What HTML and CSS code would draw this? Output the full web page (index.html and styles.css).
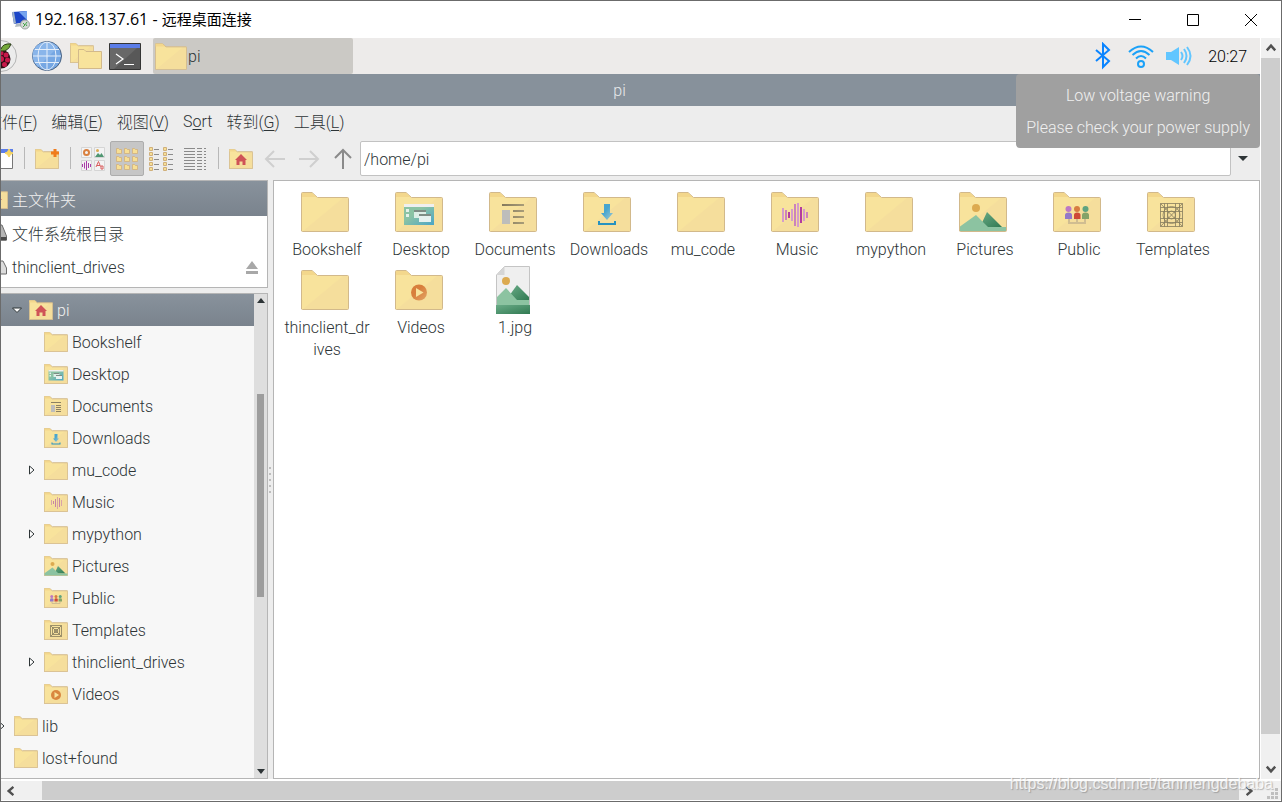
FILE: index.html
```html
<!DOCTYPE html>
<html lang="zh-CN">
<head>
    <meta charset="UTF-8">
    <meta name="viewport" content="width=device-width, initial-scale=1.0">
    <title>192.168.137.61 - 远程桌面连接</title>
    <link rel="stylesheet" href="styles.css">
</head>
<body>
    <!-- Shared icons -->
    <svg class="sprite" aria-hidden="true">
        <defs>
            <linearGradient id="folderFill" x1="0" y1="0" x2="1" y2="1">
                <stop offset="0.5" stop-color="#f8e39c"/>
                <stop offset="0.52" stop-color="#f5de9c"/>
            </linearGradient>
            <linearGradient id="deskFill" x1="0" y1="0" x2="1" y2="1">
                <stop offset="0.4" stop-color="#8bc3a4"/>
                <stop offset="1" stop-color="#4aa5c8"/>
            </linearGradient>
            <linearGradient id="hillFill" x1="0" y1="0" x2="1" y2="1">
                <stop offset="0" stop-color="#6aab87"/>
                <stop offset="1" stop-color="#317a52"/>
            </linearGradient>
            <linearGradient id="downFill" x1="0" y1="0" x2="1" y2="1">
                <stop offset="0.4" stop-color="#47a5cf"/>
                <stop offset="1" stop-color="#a5cbd0"/>
            </linearGradient>
            <linearGradient id="lineFill" x1="0" y1="0" x2="1" y2="0">
                <stop offset="0" stop-color="#84795c"/>
                <stop offset="1" stop-color="#a89c78"/>
            </linearGradient>
            <linearGradient id="playFill" x1="0" y1="0" x2="1" y2="1">
                <stop offset="0.4" stop-color="#d87f3c"/>
                <stop offset="1" stop-color="#e3a566"/>
            </linearGradient>
        </defs>
        <symbol id="folder" viewBox="0 0 48 40">
            <path d="M.5 39V1.500Q.5 .5 1.500 .5H11L16.500 5.500H46.500Q47.500 5.500 47.500 6.500V38.500Q47.500 39.500 46.500 39.500H1.500Q.5 39.500 .5 38.500Z" fill="url(#folderFill)" stroke="#d2b98b" vector-effect="non-scaling-stroke"/>
            <path d="M1 1H11L15.500 5H1Z" fill="#f3d78c"/>
        </symbol>
        <symbol id="folder-desktop" viewBox="0 0 48 40">
            <use href="#folder"/>
            <path d="M9 12H39V33H9Z" fill="url(#deskFill)"/>
            <path d="M9 12H39V15H9Z" fill="#efefef"/>
            <path d="M11 17h3v3h-3ZM11 22h3v3h-3Z" fill="#e5f2ea"/>
            <path d="M19 18H31V26H19Z" fill="#dceee6"/>
            <path d="M24 22H36V30H24Z" fill="#e6f2f0"/>
            <path d="M19 18H31V20H19ZM24 22H36V24H24Z" fill="#7e8d85"/>
        </symbol>
        <symbol id="folder-documents" viewBox="0 0 48 40">
            <use href="#folder"/>
            <path d="M13 12H35V14H13ZM24 18H35V20H24ZM24 24H35V26H24ZM24 30H35V32H24Z" fill="url(#lineFill)"/>
            <path d="M13 18H21V32H13Z" fill="#bdbdbb"/>
        </symbol>
        <symbol id="folder-documents-small" viewBox="0 0 24 20">
            <use href="#folder"/>
            <path d="M7 6H17V7H7ZM12 9H17V10H12ZM12 11H17V12H12ZM12 13H17V14H12ZM12 15H17V16H12Z" fill="#8c8162"/>
            <path d="M7 9H11V16H7Z" fill="#bdbdbb"/>
        </symbol>
        <symbol id="folder-downloads" viewBox="0 0 48 40">
            <use href="#folder"/>
            <path d="M21 12H27V21H30L24 28L18 21H21Z" fill="url(#downFill)"/>
            <path d="M15 29h2v2h14v-2h2v4H15Z" fill="#2792c0"/>
        </symbol>
        <symbol id="folder-music" viewBox="0 0 48 40">
            <use href="#folder"/>
            <g stroke-width="2">
                <path d="M12 16V30M21 17V29M27 11V35M33 17V29" stroke="#d59ccb"/>
                <path d="M15 18V28M24 12V34M36 20V26" stroke="#cc83bb"/>
                <path d="M18 20V26M30 15V31" stroke="#b43d9e"/>
            </g>
        </symbol>
        <symbol id="folder-music-small" viewBox="0 0 24 20">
            <use href="#folder"/>
            <path d="M7.500 8V13M13.500 5V17M17.500 8V14" stroke="#d9a3a8"/>
            <path d="M9.500 9V12M11.500 7V15M15.500 6V15" stroke="#c585a4"/>
        </symbol>
        <symbol id="folder-pictures" viewBox="0 0 48 40">
            <use href="#folder"/>
            <circle cx="17" cy="16" r="4" fill="#dcaa50"/>
            <path d="M21 35L28 20L43 35Z" fill="url(#hillFill)"/>
            <path d="M1 34.500L17 23L29 35H47V39H1Z" fill="#8cc3a1"/>
        </symbol>
        <symbol id="folder-public" viewBox="0 0 48 40">
            <use href="#folder"/>
            <path d="M16 27V31H32V27M24 27V31" fill="none" stroke="#d0bd91" stroke-width="2"/>
            <circle cx="15.500" cy="17" r="3" fill="#bd79c4"/>
            <path d="M12 27V23Q12 20.500 15.500 20.500Q19 20.500 19 23V27Z" fill="#9379c8"/>
            <circle cx="24" cy="17" r="3" fill="#d77d41"/>
            <path d="M21 27V23Q21 20.500 24 20.500Q27.500 20.500 27.500 23V27Z" fill="#cf4a37"/>
            <circle cx="32.500" cy="17" r="3" fill="#5fa480"/>
            <path d="M29 27V23Q29 20.500 32.500 20.500Q36 20.500 36 23V27Z" fill="#84a368"/>
        </symbol>
        <symbol id="folder-templates" viewBox="0 0 48 40">
            <use href="#folder"/>
            <g fill="none" stroke="#857c5d" stroke-width="0.800">
                <path d="M13.500 11.500H35.500V34.500H13.500ZM13.500 11.500L35.500 34.500M35.500 11.500L13.500 34.500M13.500 15.500H35.500M13.500 19.500H35.500M13.500 26.500H35.500M13.500 30.500H35.500M17.500 11.500V34.500M20.500 11.500V34.500M28.500 11.500V34.500M32.500 11.500V34.500"/>
                <circle cx="24.500" cy="23" r="8.500"/>
                <circle cx="24.500" cy="23" r="4"/>
            </g>
        </symbol>
        <symbol id="folder-templates-small" viewBox="0 0 24 20">
            <use href="#folder"/>
            <path d="M6.500 5.500H17.500V16.500H6.500ZM8.500 7.500H15.500V14.500H8.500ZM10.500 9.500H13.500V12.500H10.500ZM6.500 5.500L17.500 16.500M17.500 5.500L6.500 16.500" fill="none" stroke="#857c5d" stroke-width="0.800"/>
        </symbol>
        <symbol id="folder-videos" viewBox="0 0 48 40">
            <use href="#folder"/>
            <circle cx="24" cy="22.500" r="8" fill="url(#playFill)"/>
            <path d="M21 18L28.500 22.500L21 27Z" fill="#f8e39c"/>
        </symbol>
        <symbol id="folder-videos-small" viewBox="0 0 24 20">
            <use href="#folder"/>
            <circle cx="12" cy="11" r="5" fill="#d9873f"/>
            <path d="M10.500 8L15 11L10.500 14Z" fill="#f8e39c"/>
        </symbol>
        <symbol id="folder-home" viewBox="0 0 48 40">
            <use href="#folder"/>
            <path d="M24 10L36 22H33V32H27V25H21V32H15V22H12Z" fill="#cf5357"/>
        </symbol>
        <symbol id="image-file" viewBox="0 0 48 48">
            <path d="M7.500 9L15.500 .5H40.500V47.500H7.500Z" fill="#efefef" stroke="#c4c4c4"/>
            <path d="M7.500 9L15.500 .5V9Z" fill="#d5d5d5"/>
            <circle cx="17" cy="15" r="4" fill="#dcaa50"/>
            <path d="M20 30L28 19L40 31V34H20Z" fill="url(#hillFill)"/>
            <path d="M8 31L17 22L28 34H40V39H8Z" fill="#8cc3a1"/>
            <path d="M7 39H41V48H7Z" fill="url(#hillFill)"/>
        </symbol>
        <symbol id="drive" viewBox="0 0 24 20">
            <path d="M4 2H18L22.500 13V17H1V13Z" fill="#b5b5b5" stroke="#6d6d6d"/>
            <path d="M1 14H22.500V17.500H1Z" fill="#4a4a4a"/>
        </symbol>
        <symbol id="drive-light" viewBox="0 0 24 20">
            <path d="M4 4H19L22.500 11V17H1V11Z" fill="#dcdcdc" stroke="#6d6d6d"/>
        </symbol>
        <symbol id="expander" viewBox="0 0 8 12">
            <path d="M1.500 2L6 6L1.500 10Z" fill="#fff" stroke="#2d3436"/>
        </symbol>
        <symbol id="chevron" viewBox="0 0 10 10">
            <path d="M1.500 7L5 3L8.500 7" fill="none" stroke="#505050" stroke-width="2"/>
        </symbol>
    </svg>

    <div class="window">
        <header class="titlebar">
            <svg class="app-icon" viewBox="0 0 20 20" aria-hidden="true">
                <path d="M1 2L16 1V12L3 14Z" fill="#1c46c8"/>
                <path d="M8 2L16 1V10Z" fill="#76a4ee"/>
                <path d="M1 2L3 14L5 13L3 2Z" fill="#9fb2c8"/>
                <path d="M5 14L11 13L12 16L4 17Z" fill="#b4bcc2"/>
                <circle cx="14" cy="14.500" r="4.500" fill="#d4d8d6" stroke="#9da4a0"/>
                <path d="M12 13L14 15L12 17M16 12L14.500 14L16 16" fill="none" stroke="#42a248"/>
            </svg>
            <h1>192.168.137.61 - <span>远程桌面连接</span></h1>
            <button type="button" class="caption-button" aria-label="最小化"><svg viewBox="0 0 12 12"><path d="M0 5.500H12" stroke="#000"/></svg></button>
            <button type="button" class="caption-button" aria-label="最大化"><svg viewBox="0 0 12 12"><path d="M.5 .5H11.500V11.500H.5Z" fill="none" stroke="#000"/></svg></button>
            <button type="button" class="caption-button" aria-label="关闭"><svg viewBox="0 0 12 12"><path d="M0 0L12 12M12 0L0 12" stroke="#000"/></svg></button>
        </header>

        <div class="client">
            <div class="viewport">
                <div class="session">
                    <!-- Raspberry Pi panel -->
                    <div class="panel">
                        <button type="button" class="launcher start" aria-label="Menu">
                            <svg viewBox="0 0 32 32">
                                <circle cx="16" cy="16" r="15.500" fill="#ececec" stroke="#b4b4b4"/>
                                <circle cx="16" cy="19" r="9.500" fill="#2a0b12"/>
                                <g fill="#c7184a">
                                    <circle cx="16" cy="13" r="2.500"/>
                                    <circle cx="11" cy="15" r="2.500"/>
                                    <circle cx="21" cy="15" r="2.500"/>
                                    <circle cx="16" cy="19" r="3"/>
                                    <circle cx="9.500" cy="20" r="2.500"/>
                                    <circle cx="22.500" cy="20" r="2.500"/>
                                    <circle cx="12.500" cy="24.500" r="2.500"/>
                                    <circle cx="19.500" cy="24.500" r="2.500"/>
                                </g>
                                <path d="M16 11Q10 12 6 4Q14 3 16 9Q18 3 26 4Q23 12 16 11Z" fill="#74a83b" stroke="#2b3d18"/>
                            </svg>
                        </button>
                        <button type="button" class="launcher" aria-label="Web browser">
                            <svg viewBox="0 0 32 32">
                                <circle cx="16" cy="16" r="14.500" fill="#76a7e3" stroke="#4b6280"/>
                                <path d="M3 9A15 15 0 0 1 27 7L7 27A15 15 0 0 1 3 9Z" fill="#89b5ea"/>
                                <g fill="none" stroke="#e4eefa">
                                    <ellipse cx="16" cy="16" rx="9" ry="14"/>
                                    <path d="M16 2V30M2 16H30M4 9.500H28M4 22.500H28"/>
                                </g>
                            </svg>
                        </button>
                        <button type="button" class="launcher" aria-label="File manager">
                            <svg viewBox="0 0 32 32">
                                <use href="#folder" x="0" y="3" width="24" height="20"/>
                                <path d="M8.500 28.500V9.500H14L16 11.500H31.500V28.500Z" fill="#f8e39c" stroke="#d2b98b"/>
                            </svg>
                        </button>
                        <button type="button" class="launcher" aria-label="Terminal">
                            <svg viewBox="0 0 32 32">
                                <path d="M.5 3.500H31.500V29.500H.5Z" fill="#585858" stroke="#353535"/>
                                <path d="M1 8H28L5 29H1Z" fill="#686868"/>
                                <path d="M1 4H31V8H1Z" fill="#5b7de8"/>
                                <path d="M7 14L14 19L7 24M15 24.500H25" fill="none" stroke="#fff" stroke-width="1.200"/>
                            </svg>
                        </button>
                        <button type="button" class="task">
                            <svg viewBox="0 0 48 40"><use href="#folder"/></svg>
                            <span>pi</span>
                        </button>
                        <div class="tray">
                            <svg viewBox="0 0 28 28" role="img" aria-label="Bluetooth"><path d="M7 8L20 19L14 25V2L20 8L7 19" fill="none" stroke="#0a84ff" stroke-width="2"/></svg>
                            <svg viewBox="0 0 28 28" role="img" aria-label="Wi-Fi">
                                <g fill="none" stroke="#1ba1f8" stroke-width="2">
                                    <circle cx="14" cy="22" r="3"/>
                                    <path d="M2 10Q14 -1 26 10M5.500 13Q14 5 22.500 13M9 16.500Q14 11.500 19 16.500"/>
                                </g>
                            </svg>
                            <svg viewBox="0 0 28 28" role="img" aria-label="Volume">
                                <path d="M1 10H6L14 5V23L6 18H1Z" fill="#62c6ff"/>
                                <path d="M16 10Q19 14 16 18M19 7Q24 14 19 21M22 5Q29 14 22 23" fill="none" stroke="#62c6ff" stroke-width="2"/>
                            </svg>
                            <time>20:27</time>
                        </div>
                    </div>

                    <div class="notice" role="alert">
                        <p>Low voltage warning</p>
                        <p>Please check your power supply</p>
                    </div>

                    <!-- File manager window -->
                    <div class="fm-title">pi</div>
                    <nav class="menubar">
                        <button type="button">文件(<u>F</u>)</button>
                        <button type="button">编辑(<u>E</u>)</button>
                        <button type="button">视图(<u>V</u>)</button>
                        <button type="button">S<u>o</u>rt</button>
                        <button type="button">转到(<u>G</u>)</button>
                        <button type="button">工具(<u>L</u>)</button>
                    </nav>
                    <div class="toolbar">
                        <button type="button" class="tool" aria-label="New window">
                            <svg viewBox="0 0 24 24">
                                <path d="M.5 2.500H23.500V21.500H.5Z" fill="#fff" stroke="#777"/>
                                <path d="M0 2H24V6H0Z" fill="#5b7de8"/>
                                <path d="M20 2L21.500 5L24 6L21.500 7.500L20 10L18.500 7.500L16 6L18.500 5Z" fill="#f7d560" stroke="#f7d560"/>
                            </svg>
                        </button>
                        <span class="separator"></span>
                        <button type="button" class="tool" aria-label="New folder">
                            <svg viewBox="0 0 24 24">
                                <use href="#folder" y="2" width="24" height="20"/>
                                <path d="M18.500 2h3v2.500h2.500v3h-2.500v2.500h-3v-2.500h-2.500v-3h2.500Z" fill="#f07c1c"/>
                            </svg>
                        </button>
                        <span class="separator"></span>
                        <button type="button" class="tool" aria-label="Thumbnails">
                            <svg viewBox="0 0 24 24">
                                <path d="M.5 .5H10.500V10.500H.5ZM13.500 .5H23.500V10.500H13.500ZM.5 13.500H10.500V23.500H.5ZM13.500 13.500H23.500V23.500H13.500Z" fill="#f3f3f3" stroke="#d5d5d5"/>
                                <circle cx="5.500" cy="5.500" r="2.500" fill="none" stroke="#d9803f" stroke-width="2"/>
                                <circle cx="16.500" cy="3.500" r="1.500" fill="#dcaa50"/>
                                <path d="M14 10L17 6L19 8L20.500 6L23 10Z" fill="#4f9671"/>
                                <path d="M1.500 17V20M3.500 15.500V21.500M5.500 14V23M7.500 16V21M9.500 17V20" stroke="#a93ca8"/>
                                <path d="M15 20L17.500 14.500L19.500 19.500M16 18.500H19M20 19H22V22H20Z" fill="none" stroke="#d95c5c"/>
                            </svg>
                        </button>
                        <button type="button" class="tool active" aria-label="Icons" aria-pressed="true">
                            <svg viewBox="0 0 24 24">
                                <g fill="#f7df94" stroke="#d0b07c" stroke-width="0.800">
                                    <path d="M1.500 1.500h2l1 1h2v4h-5ZM9.500 1.500h2l1 1h2v4h-5ZM17.500 1.500h2l1 1h2v4h-5Z"/>
                                    <path d="M1.500 9.500h2l1 1h2v4h-5ZM9.500 9.500h2l1 1h2v4h-5ZM17.500 9.500h2l1 1h2v4h-5Z"/>
                                    <path d="M1.500 17.500h2l1 1h2v4h-5ZM9.500 17.500h2l1 1h2v4h-5ZM17.500 17.500h2l1 1h2v4h-5Z"/>
                                </g>
                            </svg>
                        </button>
                        <button type="button" class="tool" aria-label="Compact">
                            <svg viewBox="0 0 24 24">
                                <path d="M.5 .5h3v3h-3ZM.5 5.500h3v3h-3ZM.5 10.500h3v3h-3ZM.5 15.500h3v3h-3ZM.5 20.500h3v3h-3ZM14.500 .5h3v3h-3ZM14.500 5.500h3v3h-3ZM14.500 10.500h3v3h-3ZM14.500 15.500h3v3h-3ZM14.500 20.500h3v3h-3Z" fill="#f7df94" stroke="#d0b07c"/>
                                <path d="M5 2.500H10M5 7.500H10M5 12.500H10M5 17.500H10M5 22.500H10M19 2.500H24M19 7.500H24M19 12.500H24M19 17.500H24M19 22.500H24" stroke="#8c8c8c"/>
                            </svg>
                        </button>
                        <button type="button" class="tool" aria-label="Details">
                            <svg viewBox="0 0 24 24">
                                <path d="M1 1.500H23M1 4.500H23M1 7.500H23M1 10.500H23M1 13.500H23M1 16.500H23M1 19.500H23M1 22.500H23" stroke="#8a8a8a"/>
                                <path d="M13 0V24M20 0V24" stroke="#ededed" stroke-width="2"/>
                            </svg>
                        </button>
                        <span class="separator"></span>
                        <button type="button" class="tool" aria-label="Home"><svg viewBox="0 0 24 24"><use href="#folder-home" y="2" width="24" height="20"/></svg></button>
                        <button type="button" class="tool" aria-label="Back"><svg viewBox="0 0 24 24"><path d="M22 12H3M11 4L3 12L11 20" fill="none" stroke="#cfcfcf" stroke-width="2"/></svg></button>
                        <button type="button" class="tool" aria-label="Forward"><svg viewBox="0 0 24 24"><path d="M2 12H21M13 4L21 12L13 20" fill="none" stroke="#cfcfcf" stroke-width="2"/></svg></button>
                        <button type="button" class="tool" aria-label="Up"><svg viewBox="0 0 24 24"><path d="M12 22V3M4 11L12 3L20 11" fill="none" stroke="#8a8a8a" stroke-width="2"/></svg></button>
                        <input type="text" class="path" aria-label="Location" value="/home/pi">
                        <button type="button" class="path-drop" aria-label="History"><svg viewBox="0 0 10 6"><path d="M0 0H10L5 5Z" fill="#2d3436"/></svg></button>
                    </div>

                    <div class="fm-body">
                        <aside class="side">
                            <ul class="places">
                                <li class="selected"><svg viewBox="0 0 48 40"><use href="#folder-home"/></svg>主文件夹</li>
                                <li><svg viewBox="0 0 24 20"><use href="#drive"/></svg>文件系统根目录</li>
                                <li>
                                    <svg viewBox="0 0 24 20"><use href="#drive-light"/></svg>thinclient_drives
                                    <button type="button" class="eject" aria-label="Eject"><svg viewBox="0 0 12 13"><path d="M6 0L12 8H0ZM0 10H12V13H0Z" fill="#a8a8a8"/></svg></button>
                                </li>
                            </ul>
                            <div class="tree-pane">
                                <ul class="tree">
                                    <li class="level-1 selected"><svg class="arrow" viewBox="0 0 12 12"><path d="M1.500 4H10.500L6 8.500Z" fill="#fff" stroke="#2d3436"/></svg><svg viewBox="0 0 48 40"><use href="#folder-home"/></svg>pi</li>
                                    <li class="level-2"><svg viewBox="0 0 48 40"><use href="#folder"/></svg>Bookshelf</li>
                                    <li class="level-2"><svg viewBox="0 0 48 40"><use href="#folder-desktop"/></svg>Desktop</li>
                                    <li class="level-2"><svg viewBox="0 0 24 20"><use href="#folder-documents-small"/></svg>Documents</li>
                                    <li class="level-2"><svg viewBox="0 0 48 40"><use href="#folder-downloads"/></svg>Downloads</li>
                                    <li class="level-2"><svg class="arrow" viewBox="0 0 8 12"><use href="#expander"/></svg><svg viewBox="0 0 48 40"><use href="#folder"/></svg>mu_code</li>
                                    <li class="level-2"><svg viewBox="0 0 24 20"><use href="#folder-music-small"/></svg>Music</li>
                                    <li class="level-2"><svg class="arrow" viewBox="0 0 8 12"><use href="#expander"/></svg><svg viewBox="0 0 48 40"><use href="#folder"/></svg>mypython</li>
                                    <li class="level-2"><svg viewBox="0 0 48 40"><use href="#folder-pictures"/></svg>Pictures</li>
                                    <li class="level-2"><svg viewBox="0 0 48 40"><use href="#folder-public"/></svg>Public</li>
                                    <li class="level-2"><svg viewBox="0 0 24 20"><use href="#folder-templates-small"/></svg>Templates</li>
                                    <li class="level-2"><svg class="arrow" viewBox="0 0 8 12"><use href="#expander"/></svg><svg viewBox="0 0 48 40"><use href="#folder"/></svg>thinclient_drives</li>
                                    <li class="level-2"><svg viewBox="0 0 24 20"><use href="#folder-videos-small"/></svg>Videos</li>
                                    <li class="level-0"><svg class="arrow" viewBox="0 0 8 12"><use href="#expander"/></svg><svg viewBox="0 0 48 40"><use href="#folder"/></svg>lib</li>
                                    <li class="level-0"><svg viewBox="0 0 48 40"><use href="#folder"/></svg>lost+found</li>
                                </ul>
                                <div class="tree-scroll">
                                    <svg viewBox="0 0 10 6"><path d="M1 5L5 0L9 5Z" fill="#2d3436"/></svg>
                                    <div class="tree-track"><div class="tree-thumb"></div></div>
                                    <svg viewBox="0 0 10 6"><path d="M1 1H9L5 6Z" fill="#2d3436"/></svg>
                                </div>
                            </div>
                        </aside>
                        <div class="splitter"><i></i><i></i><i></i><i></i><i></i></div>
                        <main class="files">
                            <div class="file"><svg viewBox="0 -4 48 48"><use href="#folder" width="48" height="40"/></svg><span>Bookshelf</span></div>
                            <div class="file"><svg viewBox="0 -4 48 48"><use href="#folder-desktop" width="48" height="40"/></svg><span>Desktop</span></div>
                            <div class="file"><svg viewBox="0 -4 48 48"><use href="#folder-documents" width="48" height="40"/></svg><span>Documents</span></div>
                            <div class="file"><svg viewBox="0 -4 48 48"><use href="#folder-downloads" width="48" height="40"/></svg><span>Downloads</span></div>
                            <div class="file"><svg viewBox="0 -4 48 48"><use href="#folder" width="48" height="40"/></svg><span>mu_code</span></div>
                            <div class="file"><svg viewBox="0 -4 48 48"><use href="#folder-music" width="48" height="40"/></svg><span>Music</span></div>
                            <div class="file"><svg viewBox="0 -4 48 48"><use href="#folder" width="48" height="40"/></svg><span>mypython</span></div>
                            <div class="file"><svg viewBox="0 -4 48 48"><use href="#folder-pictures" width="48" height="40"/></svg><span>Pictures</span></div>
                            <div class="file"><svg viewBox="0 -4 48 48"><use href="#folder-public" width="48" height="40"/></svg><span>Public</span></div>
                            <div class="file"><svg viewBox="0 -4 48 48"><use href="#folder-templates" width="48" height="40"/></svg><span>Templates</span></div>
                            <div class="file"><svg viewBox="0 -4 48 48"><use href="#folder" width="48" height="40"/></svg><span>thinclient_drives</span></div>
                            <div class="file"><svg viewBox="0 -4 48 48"><use href="#folder-videos" width="48" height="40"/></svg><span>Videos</span></div>
                            <div class="file"><svg viewBox="0 0 48 48"><use href="#image-file"/></svg><span>1.jpg</span></div>
                        </main>
                    </div>
                </div>
            </div>
            <div class="scroll-v">
                <button type="button" aria-label="向上滚动"><svg viewBox="0 0 10 10"><use href="#chevron"/></svg></button>
                <div class="thumb"></div>
                <div class="rest"></div>
                <button type="button" aria-label="向下滚动"><svg class="down" viewBox="0 0 10 10"><use href="#chevron"/></svg></button>
            </div>
        </div>
        <div class="scroll-h">
            <button type="button" aria-label="向左滚动"><svg class="left" viewBox="0 0 10 10"><use href="#chevron"/></svg></button>
            <div class="rest"></div>
            <div class="thumb"></div>
            <button type="button" aria-label="向右滚动"><svg class="right" viewBox="0 0 10 10"><use href="#chevron"/></svg></button>
            <svg class="grip" viewBox="0 0 11 11" aria-hidden="true"><path d="M8 0h3v3h-3ZM4 4h3v3h-3ZM8 4h3v3h-3ZM0 8h3v3h-3ZM4 8h3v3h-3ZM8 8h3v3h-3Z" fill="#bfbfbf"/></svg>
        </div>
        <div class="watermark">https://blog.csdn.net/tanmengdebaba</div>
    </div>
</body>
</html>
```
FILE: styles.css
```css
* {
    box-sizing: border-box;
}
body {
    margin: 0;
    font-family: Roboto, "Noto Sans CJK SC", sans-serif;
    font-size: 16px;
    font-weight: 300;
    color: #2d3436;
}
button {
    font: inherit;
    color: inherit;
    background: none;
    border: 0;
    padding: 0;
}
svg {
    display: block;
    flex: none;
}
ul, p {
    margin: 0;
    padding: 0;
    list-style: none;
}
.sprite {
    position: absolute;
    width: 0;
    height: 0;
}
.window {
    position: relative;
    display: flex;
    flex-direction: column;
    height: 100vh;
    border: 1px solid #6b6b6b;
    background: #fff;
    overflow: hidden;
}

/* Remote desktop title bar */
.titlebar {
    display: flex;
    align-items: center;
    flex: none;
    height: 37px;
    padding: 0 1px 0 10px;
}
.app-icon {
    width: 20px;
    height: 20px;
}
.titlebar h1 {
    flex: 1;
    margin: 0;
    padding: 0 0 2px 4px;
    font-family: "Open Sans", "Noto Sans CJK SC", sans-serif;
    font-size: 16px;
    font-weight: 400;
    line-height: 24px;
    color: #000;
}
.titlebar h1 span {
    font-size: 15px;
}
.caption-button {
    display: flex;
    align-items: center;
    justify-content: center;
    width: 58px;
    height: 37px;
}
.caption-button svg {
    width: 12px;
    height: 12px;
}

.client {
    display: flex;
    flex: 1;
    min-height: 0;
}
.viewport {
    flex: 1;
    min-width: 0;
    overflow: hidden;
}
/* The remote screen is scrolled a little to the right */
.session {
    position: relative;
    display: flex;
    flex-direction: column;
    height: 100%;
    margin-left: -22px;
    background: #ededed;
}

/* Panel */
.panel {
    display: flex;
    align-items: center;
    flex: none;
    gap: 7px;
    height: 36px;
    padding-left: 6px;
    background: #edebea;
}
.launcher svg {
    width: 32px;
    height: 32px;
}
.start {
    margin-right: 7px;
}
.task {
    display: flex;
    align-items: center;
    width: 200px;
    height: 36px;
    margin-left: 5px;
    padding-left: 2px;
    background: #cbc9c5;
    border-radius: 2px;
}
.task svg {
    width: 32px;
    height: 27px;
    margin-right: 1px;
}
.tray {
    display: flex;
    align-items: center;
    gap: 10px;
    margin-left: auto;
    padding-right: 13px;
    color: #000;
}
.tray svg {
    width: 28px;
    height: 28px;
}
.tray time {
    margin-left: 5px;
}

.notice {
    position: absolute;
    top: 36px;
    right: 0;
    padding: 6px 10px 4px;
    background: #a0a0a0;
    border-radius: 4px;
    color: #f0f0f0;
    line-height: 32px;
    text-align: center;
}

/* File manager */
.fm-title {
    flex: none;
    height: 32px;
    background: #87919b;
    color: #e8eaec;
    line-height: 34px;
    text-align: center;
}
.menubar {
    display: flex;
    flex: none;
    height: 32px;
    padding-bottom: 2px;
}
.menubar button {
    padding: 0 7px;
}
.menubar u {
    text-underline-offset: 2px;
}
.toolbar {
    display: flex;
    flex: none;
    height: 42px;
    padding: 3px 0 4px 5px;
}
.tool {
    display: flex;
    align-items: center;
    justify-content: center;
    width: 34px;
    height: 35px;
    border: 1px solid transparent;
}
.tool svg {
    width: 24px;
    height: 24px;
}
.tool.active {
    background: #c6c6c6;
    border-color: #adadad;
    border-radius: 2px;
}
.separator {
    width: 12px;
    height: 22px;
    margin: 6px 0;
    background: linear-gradient(#b8b8b8, #b8b8b8) center / 1px 100% no-repeat;
}
.path {
    flex: 1;
    min-width: 0;
    height: 35px;
    padding: 2px 3px 0;
    border: 1px solid #c2c2c2;
    border-radius: 2px;
    background: #fff;
    color: inherit;
    font: inherit;
}
.path-drop {
    display: flex;
    align-items: center;
    width: 29px;
    padding-left: 7px;
}
.path-drop svg {
    width: 10px;
    height: 6px;
}

.fm-body {
    display: flex;
    flex: 1;
    min-height: 0;
}
.side {
    display: flex;
    flex-direction: column;
    flex: none;
    gap: 5px;
    width: 289px;
}
.places, .tree-pane {
    border: 1px solid #b5b5b5;
}
.places {
    flex: none;
    padding-bottom: 3px;
    background: #fff;
}
.places li {
    display: flex;
    align-items: center;
    gap: 4px;
    height: 34px;
    padding-left: 4px;
}
.places .selected {
    height: 35px;
}
.places li > svg {
    width: 24px;
    height: 20px;
}
.side .selected {
    background: linear-gradient(#88929c, #7a838d);
    color: #f0f0f0;
}
.eject {
    margin: 0 9px 0 auto;
}
.eject svg {
    width: 12px;
    height: 13px;
}
.tree-pane {
    display: flex;
    flex: 1;
    min-height: 0;
    background: #f7f7f7;
}
.tree {
    flex: 1;
    overflow: hidden;
}
.tree li {
    display: flex;
    align-items: center;
    justify-content: flex-start;
    height: 32px;
}
.tree li > svg {
    width: 24px;
    height: 20px;
    margin-right: 4px;
}
.tree .level-0 {
    padding-left: 34px;
}
.tree .level-1 {
    padding-left: 49px;
}
.tree .level-2 {
    padding-left: 64px;
}
.tree li > .arrow {
    width: 12px;
    height: 12px;
    margin: 0 6px 0 -18px;
}
.tree-scroll {
    display: flex;
    flex-direction: column;
    align-items: center;
    width: 13px;
    padding: 4px 0;
    background: #dedede;
}
.tree-scroll svg {
    width: 10px;
    height: 6px;
}
.tree-track {
    display: flex;
    flex: 1;
    flex-direction: column;
    justify-content: flex-end;
    width: 7px;
    padding-bottom: 171px;
}
.tree-thumb {
    height: 203px;
    background: #9d9d9d;
}
.splitter {
    display: flex;
    flex-direction: column;
    align-items: center;
    justify-content: center;
    gap: 4px;
    width: 5px;
    padding-right: 1px;
}
.splitter i {
    width: 2px;
    height: 2px;
    background: #bdbdbd;
}

.files {
    display: grid;
    grid-template-columns: repeat(auto-fill, 94px);
    align-content: start;
    flex: 1;
    gap: 5px 0;
    padding: 7px 0 0 6px;
    border: 1px solid #b5b5b5;
    background: #fff;
}
.file {
    display: flex;
    flex-direction: column;
    align-items: center;
    gap: 3px;
    padding: 0 3px;
    line-height: 22px;
    text-align: center;
}
.file svg {
    width: 48px;
    height: 48px;
    margin-right: 4px;
}
.file span {
    max-width: 100%;
    overflow-wrap: anywhere;
}

/* Remote desktop scroll bars */
.scroll-v, .scroll-h {
    display: flex;
    flex: none;
    background: #f0f0f0;
}
.scroll-v {
    flex-direction: column;
    width: 21px;
    border: solid #fff;
    border-width: 0 1px;
}
.scroll-h {
    align-items: stretch;
    height: 22px;
    border: solid #fff;
    border-width: 2px 0 1px;
}
.scroll-v button, .scroll-h button {
    display: flex;
    align-items: center;
    justify-content: center;
    flex: none;
    width: 19px;
    height: 20px;
}
.scroll-v .thumb, .scroll-h .thumb {
    background: #cdcdcd;
}
.scroll-v .thumb {
    flex: 27;
}
.scroll-v .rest {
    flex: 1;
}
.scroll-h .thumb {
    flex: 54;
}
.scroll-h .rest {
    flex: 1;
}
.scroll-v svg, .scroll-h button svg {
    width: 12px;
    height: 12px;
}
.down {
    transform: rotate(180deg);
}
.left {
    transform: rotate(-90deg);
}
.right {
    transform: rotate(90deg);
}
.grip {
    align-self: flex-end;
    width: 11px;
    height: 11px;
    margin: 0 3px 1px 9px;
}
.watermark {
    position: absolute;
    right: 8px;
    bottom: 8px;
    color: rgba(255, 255, 255, 0.8);
    font: 16px "Liberation Sans", Arial, sans-serif;
    text-shadow: 1px 1px 1px rgba(120, 120, 120, 0.5);
}
```
